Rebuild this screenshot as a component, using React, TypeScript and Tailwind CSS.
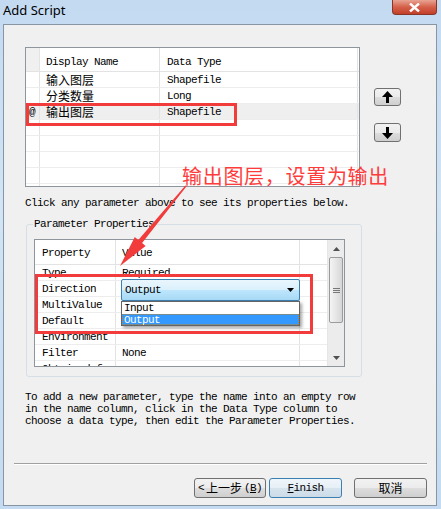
import React from "react";

const mono =
  "font-['Liberation_Mono','DejaVu_Sans_Mono',monospace] text-[11px] tracking-[-0.6px] leading-[12px] whitespace-nowrap";
const cjk = "font-['Noto_Sans_CJK_SC',sans-serif] text-[12px] leading-[14px] whitespace-nowrap";
const btn =
  "border border-[#707070] rounded-[3px] bg-[linear-gradient(#f2f2f2_0%,#ebebeb_50%,#dddddd_51%,#cfcfcf_100%)] flex items-center justify-center";

const PARAMS = [
  { sel: "", name: "输入图层", type: "Shapefile" },
  { sel: "", name: "分类数量", type: "Long" },
  { sel: "@", name: "输出图层", type: "Shapefile", active: true },
  { sel: "", name: "", type: "" },
  { sel: "", name: "", type: "" },
  { sel: "", name: "", type: "" },
  { sel: "", name: "", type: "" },
  { sel: "", name: "", type: "" },
];

const PROPS = [
  ["Type", "Required"],
  ["Direction", ""],
  ["MultiValue", ""],
  ["Default", ""],
  ["Environment", ""],
  ["Filter", "None"],
  ["Obtained from", ""],
];

function ArrowIcon({ down }: { down?: boolean }) {
  return (
    <svg width="11" height="12" viewBox="0 0 11 12" className={down ? "rotate-180" : ""}>
      <path d="M5.5 0 L11 6 L7 6 L7 12 L4 12 L4 6 L0 6 Z" fill="#000" />
    </svg>
  );
}

function ParamTable() {
  return (
    <div className="w-[335px] h-[140px] border border-[#8f959c] bg-white overflow-hidden">
      <div className="grid grid-cols-[14px_120px_198px_1fr] h-[24px] border-b border-[#e3e3e3]">
        <div className="bg-[#f0f0f0] border-r border-[#e3e3e3]" />
        <div className={`${mono} border-r border-[#e3e3e3] pl-[6px] flex items-end pb-[3px]`}>Display Name</div>
        <div className={`${mono} border-r border-[#e3e3e3] pl-[7px] flex items-end pb-[3px]`}>Data Type</div>
        <div />
      </div>
      {PARAMS.map((p, i) => (
        <div
          key={i}
          className={`grid grid-cols-[14px_120px_198px_1fr] h-[16px] border-b border-[#ededed] ${
            p.active ? "bg-[#efefef]" : ""
          }`}
        >
          <div className={`${mono} border-r border-[#e3e3e3] pl-[3px] pt-[1px] flex items-center`}>{p.sel}</div>
          <div className={`${cjk} border-r border-[#e3e3e3] pl-[6px] pt-[1px] flex items-center`}>{p.name}</div>
          <div className={`${mono} border-r border-[#e3e3e3] pl-[7px] pt-[1px] flex items-center`}>{p.type}</div>
          <div />
        </div>
      ))}
    </div>
  );
}

function ScrollBar() {
  return (
    <div className="w-[17px] flex flex-col bg-[#ececec] border-l border-[#e6e6e6]">
      <div className="h-[17px] flex items-center justify-center">
        <svg width="7" height="4" viewBox="0 0 7 4">
          <path d="M3.5 0 L7 4 L0 4 Z" fill="#505050" />
        </svg>
      </div>
      <div className="h-[66px] mx-[1px] rounded-[2px] border border-[#9b9b9b] bg-[linear-gradient(90deg,#f4f4f4,#e6e6e6_50%,#d6d6d6)] flex flex-col items-center justify-center gap-[1px]">
        <div className="w-[7px] h-[1px] bg-[#777]" />
        <div className="w-[7px] h-[1px] bg-[#777]" />
        <div className="w-[7px] h-[1px] bg-[#777]" />
      </div>
      <div className="flex-1" />
      <div className="h-[17px] flex items-center justify-center">
        <svg width="7" height="4" viewBox="0 0 7 4">
          <path d="M0 0 L7 0 L3.5 4 Z" fill="#505050" />
        </svg>
      </div>
    </div>
  );
}

function PropGrid() {
  return (
    <div className="ml-[7px] mt-[9px] w-[311px] h-[128px] border border-[#8f959c] bg-white flex overflow-hidden">
      <div className="flex-1 overflow-hidden">
        <div className="grid grid-cols-[81px_184px_1fr] h-[25px] border-b border-[#e3e3e3]">
          <div className={`${mono} border-r border-[#e3e3e3] pl-[7px] flex items-end pb-[5px]`}>Property</div>
          <div className={`${mono} border-r border-[#e3e3e3] pl-[6px] flex items-end pb-[5px]`}>Value</div>
          <div />
        </div>
        {PROPS.map(([k, v]) => (
          <div key={k} className="grid grid-cols-[81px_184px_1fr] h-[16px] border-b border-[#ededed]">
            <div className={`${mono} border-r border-[#e3e3e3] pl-[7px] flex items-center overflow-hidden`}>{k}</div>
            <div className={`${mono} border-r border-[#e3e3e3] pl-[6px] flex items-center`}>{v}</div>
            <div />
          </div>
        ))}
      </div>
      <ScrollBar />
    </div>
  );
}

export default function App() {
  return (
    <div className="relative w-[441px] h-[509px] overflow-hidden flex flex-col bg-[linear-gradient(180deg,#c3daf1,#d2e4f5_40%,#c4dbf1)]">
      {/* title bar */}
      <div className="h-[24px] flex items-start justify-between pl-[3px]">
        <div className="font-['Noto_Sans',sans-serif] text-[13px] leading-[20px] text-black">Add Script</div>
        <div className="mr-[4px] w-[45px] h-[15px] rounded-b-[4px] border border-t-0 border-[#8b3526] bg-[linear-gradient(#e8a493,#d5604a_50%,#c2402a)] flex items-center justify-center">
          <svg width="11" height="9" viewBox="0 0 11 9">
            <path d="M1 0.5 L10 8.5 M10 0.5 L1 8.5" stroke="#fff" strokeWidth="2.4" />
          </svg>
        </div>
      </div>

      {/* dialog body */}
      <div className="flex-1 ml-[3px] mr-[4px] mb-[3px] border border-[#8796a5] bg-[#f0f0f0] flex flex-col">
        <div className="flex mt-[22px] ml-[21px]">
          <ParamTable />
          <div className="ml-[14px] pt-[41px] flex flex-col gap-[17px]">
            <div className={`${btn} w-[27px] h-[18px]`}>
              <ArrowIcon />
            </div>
            <div className={`${btn} w-[27px] h-[19px]`}>
              <ArrowIcon down />
            </div>
          </div>
        </div>

        <div className={`${mono} ml-[21px] mt-[10px]`}>Click any parameter above to see its properties below.</div>

        <fieldset className="ml-[22px] mt-[9px] w-[336px] h-[159px] border border-[#d5dfe5] rounded-[3px]">
          <legend className={`${mono} ml-[6px] px-[1px]`}>Parameter Properties</legend>
          <PropGrid />
        </fieldset>

        <div className={`${mono} ml-[21px] mt-[14px] whitespace-pre`}>
          {"To add a new parameter, type the name into an empty row\nin the name column, click in the Data Type column to\nchoose a data type, then edit the Parameter Properties."}
        </div>

        <div className="ml-[10px] mt-[36px] w-[413px] border-t border-[#a0a0a0] border-b border-b-white" />

        <div className="flex justify-end mr-[9px] mt-[13px]">
          <div className={`${btn} w-[72px] h-[20px] gap-[2px]`}>
            <span className={mono}>&lt;</span>
            <span className={cjk}>上一步</span>
            <span className={mono}>
              (<span className="underline">B</span>)
            </span>
          </div>
          <div className="ml-[3px] w-[73px] h-[20px] rounded-[3px] border border-[#3c7fb1] bg-[linear-gradient(#f0f6fa_0%,#e6eff6_50%,#d7e4ee_51%,#cbdbe8_100%)] flex items-center justify-center">
            <span className={mono}>
              <span className="underline">F</span>inish
            </span>
          </div>
          <div className={`${btn} ml-[12px] w-[73px] h-[20px]`}>
            <span className={cjk}>取消</span>
          </div>
        </div>
      </div>

      {/* open dropdown over the Direction row */}
      <div className="absolute left-[121px] top-[279px] w-[179px] h-[22px] rounded-[2px] border border-[#3c7fb1] bg-[linear-gradient(#eaf6fd_0%,#d9f0fc_50%,#bee6fd_51%,#a7d9f5_100%)] flex items-center justify-between pl-[3px] pr-[5px]">
        <span className={mono}>Output</span>
        <svg width="7" height="4" viewBox="0 0 7 4">
          <path d="M0 0 L7 0 L3.5 4 Z" fill="#000" />
        </svg>
      </div>
      <div className="absolute left-[121px] top-[301px] w-[179px] h-[25px] border border-[#646464] bg-white shadow-[2px_2px_3px_rgba(0,0,0,0.35)]">
        <div className={`${mono} h-[12px] pl-[2px]`}>Input</div>
        <div className={`${mono} h-[11px] pl-[2px] bg-[#3399ff] text-white outline-1 outline-dotted outline-[#c08020] -outline-offset-1`}>Output</div>
      </div>

      {/* annotations */}
      <div className="absolute left-[26px] top-[103px] w-[211px] h-[23px] border-[3px] border-[#f23c3c]" />
      <div className="absolute left-[35px] top-[274px] w-[278px] h-[60px] border-[3px] border-[#f23c3c]" />
      <div className="absolute left-[182px] top-[164px] font-['Noto_Sans_CJK_SC',sans-serif] text-[20px] leading-[24px] tracking-[0.7px] text-[#ff3c3c]">
        输出图层，设置为输出
      </div>
      <svg className="absolute left-0 top-0 pointer-events-none" width="441" height="509" viewBox="0 0 441 509">
        <polygon
          points="186.6,186.3 142.1,243.1 145.6,246 120,266 134.8,237 138.3,239.9 185.4,185.5"
          fill="#f23c3c"
        />
      </svg>
    </div>
  );
}
